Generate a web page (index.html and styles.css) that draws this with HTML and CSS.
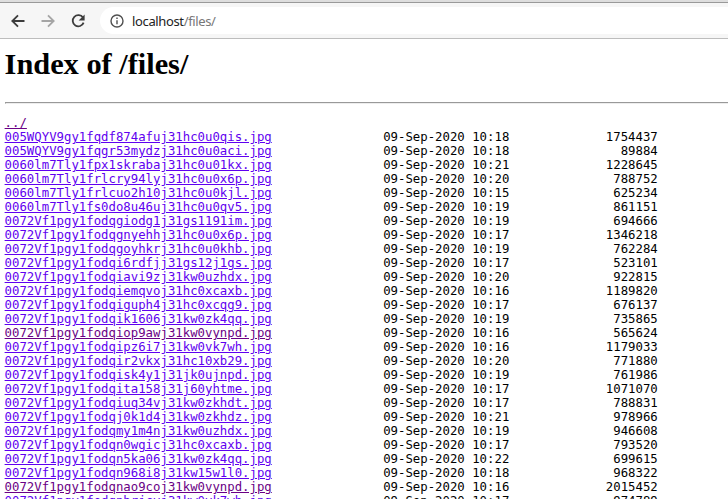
FILE: index.html
```
<!DOCTYPE html>
<html lang="en">
<head>
<meta charset="utf-8">
<title>Index of /files/</title>
<link rel="stylesheet" href="styles.css">
</head>
<body>
<header class="toolbar">
<svg class="nav" viewBox="0 0 16 16"><path d="M14.5 8H2.5M8 2.3 2.3 8 8 13.7"/></svg>
<svg class="nav nav-off" viewBox="0 0 16 16"><path d="M1.5 8h12M8 2.3 13.7 8 8 13.7"/></svg>
<svg class="nav" viewBox="0 0 16 16"><path d="M13 4.6A5.6 5.6 0 1 0 13.6 9.6"/><path class="solid" d="M14.6 1.4v6h-6z"/></svg>
<div class="address">
<svg class="info" viewBox="0 0 14 14"><circle cx="7" cy="7" r="6"/><path d="M7 6.2v4M7 3.6v1.5"/></svg>
<span class="url">localhost<span class="path">/files/</span></span>
</div>
</header>
<main class="page">
<h1>Index of /files/</h1>
<hr>
<pre><a class="visited" href="#">../</a>
<a href="#">005WQYV9gy1fqdf874afuj31hc0u0qis.jpg</a>               09-Sep-2020 10:18             1754437
<a href="#">005WQYV9gy1fqgr53mydzj31hc0u0aci.jpg</a>               09-Sep-2020 10:18               89884
<a href="#">0060lm7Tly1fpx1skrabaj31hc0u01kx.jpg</a>               09-Sep-2020 10:21             1228645
<a href="#">0060lm7Tly1frlcry94lyj31hc0u0x6p.jpg</a>               09-Sep-2020 10:20              788752
<a href="#">0060lm7Tly1frlcuo2h10j31hc0u0kjl.jpg</a>               09-Sep-2020 10:15              625234
<a href="#">0060lm7Tly1fs0do8u46uj31hc0u0qv5.jpg</a>               09-Sep-2020 10:19              861151
<a href="#">0072Vf1pgy1fodqgiodg1j31gs1191im.jpg</a>               09-Sep-2020 10:19              694666
<a href="#">0072Vf1pgy1fodqgnyehhj31hc0u0x6p.jpg</a>               09-Sep-2020 10:17             1346218
<a href="#">0072Vf1pgy1fodqgoyhkrj31hc0u0khb.jpg</a>               09-Sep-2020 10:19              762284
<a href="#">0072Vf1pgy1fodqi6rdfjj31gs12j1gs.jpg</a>               09-Sep-2020 10:17              523101
<a href="#">0072Vf1pgy1fodqiavi9zj31kw0uzhdx.jpg</a>               09-Sep-2020 10:20              922815
<a href="#">0072Vf1pgy1fodqiemqvoj31hc0xcaxb.jpg</a>               09-Sep-2020 10:16             1189820
<a href="#">0072Vf1pgy1fodqiguph4j31hc0xcqg9.jpg</a>               09-Sep-2020 10:17              676137
<a href="#">0072Vf1pgy1fodqik1606j31kw0zk4qq.jpg</a>               09-Sep-2020 10:19              735865
<a class="visited" href="#">0072Vf1pgy1fodqiop9awj31kw0vynpd.jpg</a>               09-Sep-2020 10:16              565624
<a href="#">0072Vf1pgy1fodqipz6i7j31kw0vk7wh.jpg</a>               09-Sep-2020 10:16             1179033
<a href="#">0072Vf1pgy1fodqir2vkxj31hc10xb29.jpg</a>               09-Sep-2020 10:20              771880
<a href="#">0072Vf1pgy1fodqisk4y1j31jk0ujnpd.jpg</a>               09-Sep-2020 10:19              761986
<a href="#">0072Vf1pgy1fodqita158j31j60yhtme.jpg</a>               09-Sep-2020 10:17             1071070
<a href="#">0072Vf1pgy1fodqiuq34vj31kw0zkhdt.jpg</a>               09-Sep-2020 10:17              788831
<a href="#">0072Vf1pgy1fodqj0k1d4j31kw0zkhdz.jpg</a>               09-Sep-2020 10:21              978966
<a href="#">0072Vf1pgy1fodqmy1m4nj31kw0uzhdx.jpg</a>               09-Sep-2020 10:19              946608
<a href="#">0072Vf1pgy1fodqn0wgicj31hc0xcaxb.jpg</a>               09-Sep-2020 10:17              793520
<a href="#">0072Vf1pgy1fodqn5ka06j31kw0zk4qq.jpg</a>               09-Sep-2020 10:22              699615
<a href="#">0072Vf1pgy1fodqn968i8j31kw15w1l0.jpg</a>               09-Sep-2020 10:18              968322
<a class="visited" href="#">0072Vf1pgy1fodqnao9coj31kw0vynpd.jpg</a>               09-Sep-2020 10:16             2015452
<a href="#">0072Vf1pgy1fodqnbrjcvj31kw0vk7wh.jpg</a>               09-Sep-2020 10:17              974789</pre>
</main>
</body>
</html>
```
FILE: styles.css
```
html, body { height: 100%; }
body {
  margin: 0;
  overflow: hidden;
  background: #fff;
  color: #000;
}
.toolbar {
  box-sizing: border-box;
  height: 39px;
  display: flex;
  align-items: center;
  padding: 3px 0 0 10px;
  background: linear-gradient(#dedede 2px, #999 2px, #999 3px, #f6f6f6 3px);
  border-bottom: 1px solid #bdbdbd;
}
.nav {
  width: 16px;
  height: 16px;
  margin-right: 14px;
  fill: none;
  stroke: #3c3c3c;
  stroke-width: 1.8;
}
.nav .solid { fill: #3c3c3c; stroke: none; }
.nav-off { stroke: #a5a5a5; }
.address {
  flex: 1;
  height: 27px;
  display: flex;
  align-items: center;
  padding-left: 10px;
  border-radius: 14px 0 0 14px;
  background: #fff;
}
.info {
  width: 14px;
  height: 14px;
  margin-right: 8px;
  fill: none;
  stroke: #505050;
  stroke-width: 1.4;
}
.url {
  font: 13px/18px "Noto Sans", sans-serif;
  letter-spacing: -0.36px;
  color: #222;
}
.path { color: #777; }
.page { padding: 8px 0 0 4.6px; }
h1 {
  margin: 0 0 20px;
  font: bold 30.35px/35px "Liberation Serif", serif;
}
hr {
  margin: 0 0 12px;
  border: solid;
  border-width: 1px 0 1px 1px;
  border-color: #999 #ededed #ededed #999;
}
pre {
  margin: 0;
  font: 12.335px/14px "DejaVu Sans Mono", monospace;
}
a { color: #5f00f0; }
.visited { color: #6a0085; }
```
